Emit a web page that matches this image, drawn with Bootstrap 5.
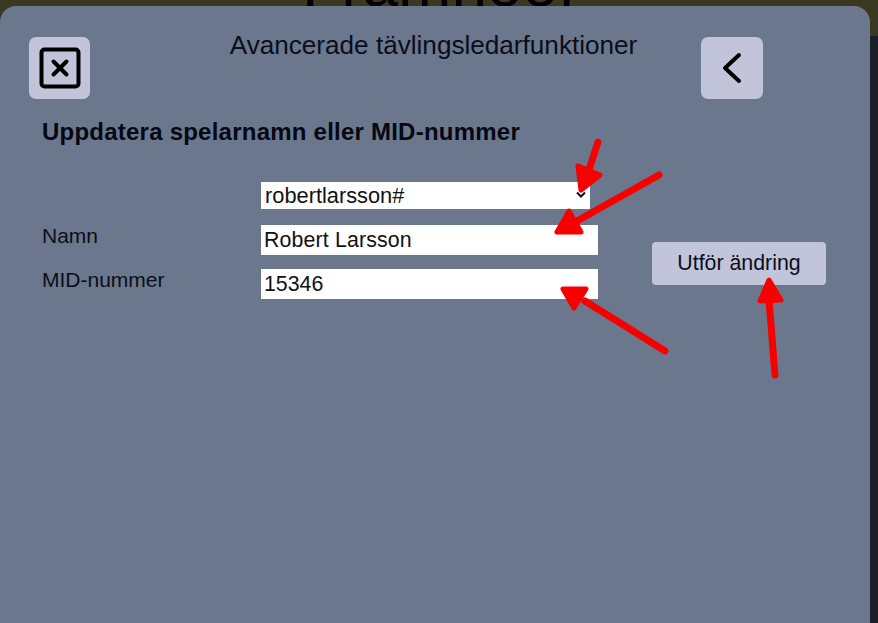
<!DOCTYPE html>
<html lang="sv">
<head>
<meta charset="utf-8">
<title>Avancerade tävlingsledarfunktioner</title>
<link rel="stylesheet" href="https://cdn.jsdelivr.net/npm/bootstrap@5.3.0/dist/css/bootstrap.min.css">
<style>
html,body{height:100%;margin:0;overflow:hidden;background:#1a2026;font-family:"Liberation Sans",Arial,sans-serif;color:#0a0e1a}
.backdrop-strip{height:36px;background:#3a3820;overflow:hidden;text-align:center;line-height:1}
.backdrop-title{font-size:64px;color:#000;display:block;margin-top:-48px;line-height:64px;height:64px}
.sheet{position:absolute;left:0;top:6px;width:870px;height:617px;background:#6b778d;border-radius:16px 16px 0 0;padding:31px 0 0 29px}
.sheet-top{display:flex;align-items:flex-start}
.icon-tile{width:61px;height:62px;background:#c2c5da;border:0;border-radius:7px;padding:0;display:flex;align-items:center;justify-content:center;flex:none}
.tile-wide{width:62px}
.sheet-title{width:611px;font-size:26.13px;line-height:30px;text-align:center;margin:-7px 0 0 0;font-weight:400;color:#0a0e1a;padding-left:76px;white-space:nowrap}
.section-title{font-size:24px;line-height:26px;font-weight:700;letter-spacing:.23px;margin:20px 0 0 13px;color:#050812}
.form-area{display:flex;margin:37px 0 0 13px}
.labels{width:219px;padding-top:42px}
.labels div{font-size:21px;line-height:24px;height:44px;color:#0a0e1a}
.fields{display:flex;flex-direction:column;width:337px}
.sel-wrap{position:relative;width:329px;height:27px;background:#fff;font-size:21.8px;line-height:27px;padding-left:4px;color:#111;margin-bottom:16px}
.sel-chev{position:absolute;right:4px;top:9px}
.text-entry{width:337px;height:30px;border:0;background:#fff;font-size:21.33px;line-height:30px;padding:0 3px;color:#111;margin-bottom:14px;border-radius:0;outline:0;font-family:inherit}
.name-entry{letter-spacing:.14px}
.apply-btn{width:174px;height:43px;background:#c2c5da;border:0;border-radius:4px;font-size:21.33px;color:#0a0e1a;margin:60px 0 0 54px;padding:0;font-family:inherit}
.marks{position:absolute;left:0;top:0;pointer-events:none}
</style>
</head>
<body>
<div class="backdrop-strip"><span class="backdrop-title">Framhoof</span></div>
<main class="sheet">
  <div class="sheet-top">
    <button class="icon-tile" aria-label="Stäng">
      <svg width="42" height="42" viewBox="0 0 42 42" fill="none" stroke="#000" stroke-linecap="round" stroke-linejoin="round"><rect x="2.5" y="2.5" width="37" height="37" rx="3" stroke-width="4"/><path d="M14.5 14.5l13 13M27.5 14.5l-13 13" stroke-width="4"/></svg>
    </button>
    <h1 class="sheet-title">Avancerade tävlingsledarfunktioner</h1>
    <button class="icon-tile tile-wide" aria-label="Tillbaka">
      <svg width="22" height="34" viewBox="0 0 22 34" fill="none" stroke="#000" stroke-width="4" stroke-linecap="round" stroke-linejoin="round"><path d="M18 4L4 17l14 13"/></svg>
    </button>
  </div>
  <h2 class="section-title">Uppdatera spelarnamn eller MID-nummer</h2>
  <div class="form-area">
    <div class="labels"><div>Namn</div><div>MID-nummer</div></div>
    <div class="fields">
      <div class="sel-wrap">robertlarsson#
        <svg class="sel-chev" width="10" height="8" viewBox="0 0 10 8" fill="none" stroke="#111" stroke-width="2"><path d="M1 1.5l4 4 4-4"/></svg>
      </div>
      <input class="text-entry name-entry" value="Robert Larsson">
      <input class="text-entry" value="15346">
    </div>
    <button class="apply-btn">Utför ändring</button>
  </div>
</main>
<svg class="marks" width="878" height="623" viewBox="0 0 878 623" fill="#f90000" stroke="#f90000" stroke-linejoin="round" stroke-linecap="round">
  <path d="M598 142L587 176" stroke-width="7"/><path d="M578 166L600 175L581 190Z" stroke-width="5"/>
  <path d="M659 175L577 221" stroke-width="7"/><path d="M569 211L557 232L581 232Z" stroke-width="5"/>
  <path d="M665 351L585 301" stroke-width="7"/><path d="M563 289L586 289L574 308Z" stroke-width="5"/>
  <path d="M775 375L769 300" stroke-width="7"/><path d="M769 280L781 300L760 301Z" stroke-width="5"/>
</svg>
<script src="https://cdn.jsdelivr.net/npm/bootstrap@5.3.0/dist/js/bootstrap.bundle.min.js"></script>
</body>
</html>
